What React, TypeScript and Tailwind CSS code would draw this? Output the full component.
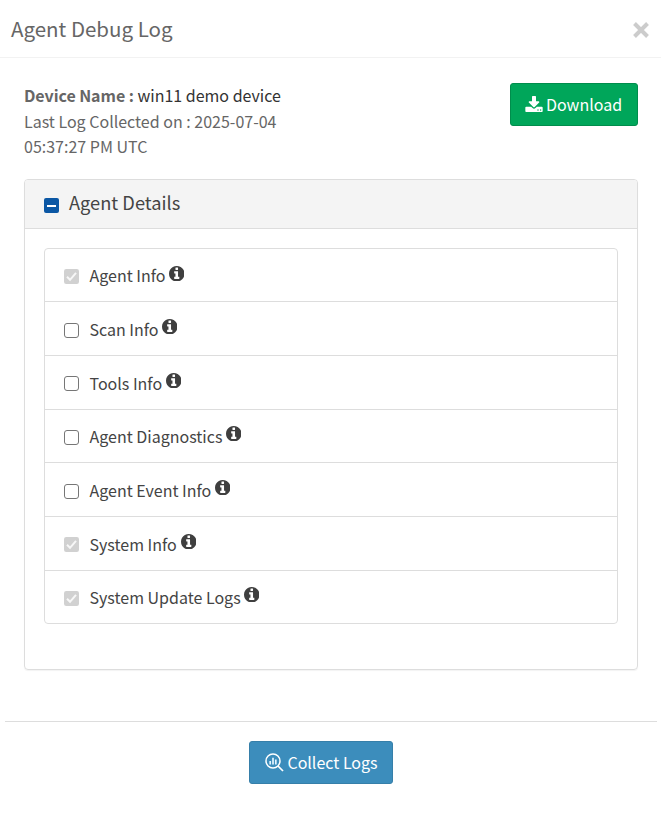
import React from "react";

type Row = { label: string; locked: boolean; height: string; width: string; icon: string; box: string };

const rows: Row[] = [
  { label: "Agent Info", locked: true, height: "h-[53px]", width: "w-[77px]", icon: "mb-[3px]", box: "mt-[3px]" },
  { label: "Scan Info", locked: false, height: "h-[54px]", width: "w-[70px]", icon: "mb-[4px]", box: "mt-[3px]" },
  { label: "Tools Info", locked: false, height: "h-[54px]", width: "w-[74px]", icon: "mb-[4px]", box: "mt-[2px]" },
  { label: "Agent Diagnostics", locked: false, height: "h-[53px]", width: "w-[134px]", icon: "mb-[5px]", box: "mt-[3px]" },
  { label: "Agent Event Info", locked: false, height: "h-[54px]", width: "w-[123px]", icon: "mb-[4px]", box: "mt-[3px]" },
  { label: "System Info", locked: true, height: "h-[54px]", width: "w-[89px]", icon: "mb-[4px]", box: "mt-[2px]" },
  { label: "System Update Logs", locked: true, height: "h-[52px]", width: "w-[152px]", icon: "mb-[5px]", box: "mt-[3px]" },
];

function InfoIcon({ offset }: { offset: string }) {
  return (
    <svg className={`h-[15.5px] w-[15.5px] shrink-0 ${offset}`} viewBox="128 128 1536 1536" fill="#3f3f3f">
      <path d="M1152 1376v-160q0-14-9-23t-23-9h-96v-512q0-14-9-23t-23-9h-320q-14 0-23 9t-9 23v160q0 14 9 23t23 9h96v320h-96q-14 0-23 9t-9 23v160q0 14 9 23t23 9h448q14 0 23-9t9-23zm-128-896v-160q0-14-9-23t-23-9h-192q-14 0-23 9t-9 23v160q0 14 9 23t23 9h192q14 0 23-9t9-23zm640 416q0 209-103 385.5t-279.5 279.5-385.5 103-385.5-103-279.5-279.5-103-385.5 103-385.5 279.5-279.5 385.5-103 385.5 103 279.5 279.5 103 385.5z" />
    </svg>
  );
}

function DownloadIcon() {
  return (
    <svg className="mb-[2px] h-4 w-[18px] shrink-0" viewBox="0 0 1664 1536" fill="white">
      <path d="M1280 1344q0-26-19-45t-45-19-45 19-19 45 19 45 45 19 45-19 19-45zm256 0q0-26-19-45t-45-19-45 19-19 45 19 45 45 19 45-19 19-45zm128-224v320q0 40-28 68t-68 28h-1472q-40 0-68-28t-28-68v-320q0-40 28-68t68-28h465l135 136q58 56 136 56t136-56l136-136h464q40 0 68 28t28 68zm-325-569q17 41-14 70l-448 448q-18 19-45 19t-45-19l-448-448q-31-29-14-70 17-39 59-39h256v-448q0-26 19-45t45-19h256q26 0 45 19t19 45v448h256q42 0 59 39z" />
    </svg>
  );
}

function CheckBox({ locked }: { locked: boolean }) {
  return locked ? (
    <svg className="h-[15px] w-[15px] shrink-0" viewBox="0 0 15 15">
      <rect width="15" height="15" rx="2.2" fill="#d1d1d1" />
      <path d="M3 7.8 6 10.8 12 3.8" fill="none" stroke="#f7f7f7" strokeWidth="2" />
    </svg>
  ) : (
    <span className="h-[15px] w-[15px] shrink-0 rounded-[3px] border border-[#767676] bg-white" />
  );
}

export default function App() {
  return (
    <div className="h-[829px] w-[661px] overflow-hidden bg-white font-['Noto_Sans_CJK_SC',sans-serif] text-[#444]">
      <header className="flex h-[58px] items-center justify-between border-b border-[#f2f2f2] pl-[11px] pr-3">
        <h1 className="mb-[2px] whitespace-nowrap text-[20.5px] leading-[30px] text-[#666]">Agent Debug Log</h1>
        <svg className="mt-[3px] h-4 w-4" viewBox="0 0 16 16">
          <path d="M1.5 1.5 14.5 14.5M14.5 1.5 1.5 14.5" stroke="#ccc" strokeWidth="4" />
        </svg>
      </header>

      <main className="px-[23px] pt-[25px]">
        <section className="flex h-[96px] items-start justify-between pl-px">
          <div className="whitespace-nowrap text-[16px] leading-[25.6px] text-[#666]">
            <p>
              <strong className="font-bold tracking-[-0.06px]">Device Name :</strong>{" "}
              <span className="text-[#333]">win11 demo device</span>
            </p>
            <p>Last Log Collected on : 2025-07-04</p>
            <p>05:37:27 PM UTC</p>
          </div>
          <button className="flex h-[43px] w-[128px] items-center justify-center gap-[3px] whitespace-nowrap rounded-[3px] border border-[#008d4c] bg-[#00a65a] pr-px text-[16px] text-white">
            <DownloadIcon />
            <span className="mb-[2px]">Download</span>
          </button>
        </section>

        <section className="ml-px h-[491px] overflow-hidden rounded-[4px] border border-[#ddd] shadow-[0_1px_1px_rgba(0,0,0,0.05)]">
          <div className="flex h-[49px] items-center gap-[10px] border-b border-[#ddd] bg-[#f4f4f4] pl-[19px]">
            <span className="mt-[3px] flex h-[15px] w-[15px] items-center justify-center rounded-[2px] bg-[#0b57a4]">
              <span className="h-[2px] w-[9px] bg-white" />
            </span>
            <h2 className="mb-[5px] text-[18.25px] leading-6 text-[#444]">Agent Details</h2>
          </div>
          <ul className="mx-[19px] mt-[19px] rounded-[4px] border border-[#ddd]">
            {rows.map((row) => (
              <li
                key={row.label}
                className={`flex items-center border-b border-[#ddd] pl-[19px] text-[16px] last:border-b-0 ${row.height}`}
              >
                <span className={`flex ${row.box}`}>
                  <CheckBox locked={row.locked} />
                </span>
                <span className={`ml-[10.5px] mr-[2px] whitespace-nowrap leading-6 ${row.width}`}>{row.label}</span>
                <InfoIcon offset={row.icon} />
              </li>
            ))}
          </ul>
        </section>
      </main>

      <footer className="mx-[5px] mr-[4px] mt-[51px] flex justify-center border-t border-[#ddd] pt-[19px]">
        <button className="mr-[20px] flex h-[43px] w-[144px] items-center justify-center gap-[3px] whitespace-nowrap rounded-[3px] border border-[#367fa9] bg-[#3c8dbc] pl-px text-[16px] text-white">
          <svg className="h-[19px] w-[19px] shrink-0" viewBox="0 0 19 19" fill="none" stroke="white">
            <circle cx="8" cy="8" r="7" strokeWidth="1.5" />
            <path d="m13 13 5 5" strokeWidth="1.7" />
            <path d="M5.2 8V11.5M8 4.8V11.5M10.8 6.5V11.5" stroke="#e3f5ff" strokeWidth="1.7" />
          </svg>
          <span className="mb-[2px]">Collect Logs</span>
        </button>
      </footer>
    </div>
  );
}
